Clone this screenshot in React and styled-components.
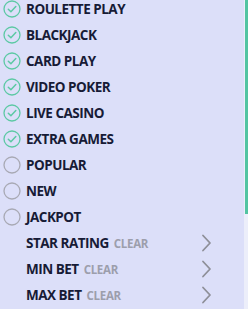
import styled, { createGlobalStyle } from 'styled-components';

const GlobalStyle = createGlobalStyle`
  html, body {
    margin: 0;
    padding: 0;
    background: #dcdff9;
  }
  * { box-sizing: border-box; }
`;

const Panel = styled.div`
  position: relative;
  width: 248px;
  height: 309px;
  overflow: hidden;
  background: #dcdff9;
  font-family: 'Open Sans', 'Liberation Sans', sans-serif;
`;

const List = styled.ul`
  list-style: none;
  margin: -4px 0 0;
  padding: 0;
`;

const Row = styled.li`
  display: flex;
  align-items: center;
  height: 26px;
  padding-left: 3px;
  padding-right: 36px;
`;

const Mark = styled.span`
  width: 18px;
  height: 18px;
  margin-right: 5px;
  flex: none;
  display: flex;
`;

const Label = styled.span`
  font-size: 13.5px;
  font-weight: 700;
  color: #171b36;
  letter-spacing: -0.5px;
  white-space: nowrap;
`;

const Clear = styled.span`
  margin-left: 5px;
  font-size: 11.5px;
  font-weight: 700;
  color: #9c9eac;
  letter-spacing: -0.3px;
`;

const Chevron = styled.span`
  margin-left: auto;
  display: flex;
`;

const Spacer = styled.span`
  width: 23px;
  flex: none;
`;

/* custom scrollbar drawn over the panel edge */
const Track = styled.div`
  position: absolute;
  top: 0;
  right: 0;
  bottom: 0;
  width: 4px;
  background: #eceefa;
`;

const Thumb = styled.div`
  margin-left: 1px;
  width: 3px;
  height: 214px;
  background: #52c4a2;
`;

const Check = ({ on }) => (
  <Mark>
    <svg width="18" height="18" viewBox="0 0 18 18">
      <circle cx="9" cy="9" r="8" fill="none" stroke={on ? '#5cc9a4' : '#a8a9b4'} strokeWidth="1.3" />
      {on && (
        <path d="M5.3 9.2 L7.9 11.8 L12.8 6.6" fill="none" stroke="#5cc9a4" strokeWidth="1.5" strokeLinecap="round" strokeLinejoin="round" />
      )}
    </svg>
  </Mark>
);

const categories = [
  { name: 'ROULETTE PLAY', on: true },
  { name: 'BLACKJACK', on: true },
  { name: 'CARD PLAY', on: true },
  { name: 'VIDEO POKER', on: true },
  { name: 'LIVE CASINO', on: true },
  { name: 'EXTRA GAMES', on: true },
  { name: 'POPULAR', on: false },
  { name: 'NEW', on: false },
  { name: 'JACKPOT', on: false },
];

const ranges = ['STAR RATING', 'MIN BET', 'MAX BET'];

const App = () => (
  <>
    <GlobalStyle />
    <Panel>
      <List>
        {categories.map((c) => (
          <Row key={c.name}>
            <Check on={c.on} />
            <Label>{c.name}</Label>
          </Row>
        ))}
        {ranges.map((r) => (
          <Row key={r}>
            <Spacer />
            <Label>{r}</Label>
            <Clear>CLEAR</Clear>
            <Chevron>
              <svg width="11" height="18" viewBox="0 0 11 18">
                <path d="M2 1.5 L9 9 L2 16.5" fill="none" stroke="#8e8f98" strokeWidth="1.8" strokeLinecap="round" strokeLinejoin="round" />
              </svg>
            </Chevron>
          </Row>
        ))}
      </List>
      <Track>
        <Thumb />
      </Track>
    </Panel>
  </>
);

export default App;
